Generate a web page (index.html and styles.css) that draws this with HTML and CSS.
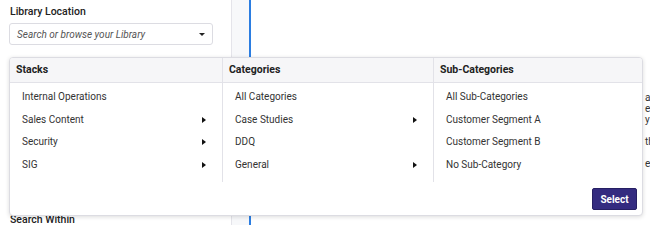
FILE: index.html
```html
<!DOCTYPE html>
<html>
<head>
<meta charset="utf-8">
<link rel="stylesheet" href="styles.css">
</head>
<body>
<div class="app">
  <aside class="sidebar">
    <div class="label">Library Location</div>
    <div class="input">
      <span class="placeholder">Search or browse your Library</span>
      <span class="caret"></span>
    </div>
    <div class="label second">Search Within</div>
  </aside>
  <div class="gutter"></div>
  <div class="bar"></div>
  <main class="main">
    <div class="line">a</div>
    <div class="line">e</div>
    <div class="line">y</div>
    <div class="line">&nbsp;</div>
    <div class="line">th</div>
    <div class="line">&nbsp;</div>
    <div class="line">e</div>
  </main>
</div>

<div class="panel">
  <div class="cols">
    <div class="col c1">
      <div class="head">Stacks</div>
      <ul class="list">
        <li>Internal Operations</li>
        <li class="sub">Sales Content</li>
        <li class="sub">Security</li>
        <li class="sub">SIG</li>
      </ul>
    </div>
    <div class="col c2">
      <div class="head">Categories</div>
      <ul class="list">
        <li>All Categories</li>
        <li class="sub">Case Studies</li>
        <li>DDQ</li>
        <li class="sub">General</li>
      </ul>
    </div>
    <div class="col c3">
      <div class="head">Sub-Categories</div>
      <ul class="list">
        <li>All Sub-Categories</li>
        <li>Customer Segment A</li>
        <li>Customer Segment B</li>
        <li>No Sub-Category</li>
      </ul>
    </div>
  </div>
  <div class="footer">
    <button class="btn">Select</button>
  </div>
</div>
</body>
</html>
```

FILE: styles.css
```css
* { box-sizing: border-box; }
html, body { margin: 0; padding: 0; }
body {
  width: 650px;
  height: 225px;
  overflow: hidden;
  background: #fff;
  font-family: Roboto, "Liberation Sans", Arial, sans-serif;
  color: #333;
  position: relative;
}
.app { display: flex; height: 225px; }
.sidebar {
  width: 232px;
  border-right: 1px solid #e4e4ea;
  padding: 4px 18px 0 9px;
  flex: none;
}
.label {
  font-size: 10.5px;
  line-height: 16px;
  font-weight: 500;
  color: #222;
  margin-left: 1px;
}
.label.second { margin-top: 167px; }
.input {
  margin-top: 3px;
  width: 204px;
  height: 22px;
  border: 1px solid #dcdce2;
  border-radius: 3px;
  display: flex;
  align-items: center;
  justify-content: space-between;
  padding: 0 7px 0 7px;
}
.placeholder {
  font-size: 10px;
  font-style: italic;
  color: #555;
}
.caret {
  width: 0; height: 0;
  border-left: 3px solid transparent;
  border-right: 3px solid transparent;
  border-top: 3px solid #222;
}
.gutter { width: 17px; background: #f7f8fa; flex: none; }
.bar { width: 2px; background: #2b7de1; flex: none; }
.main {
  flex: 1;
  padding: 91.5px 0 0 394px;
  overflow: hidden;
  white-space: nowrap;
}
.line { font-size: 10px; line-height: 11px; color: #333; }

.panel {
  position: absolute;
  left: 9px;
  top: 57px;
  width: 634px;
  height: 159px;
  background: #fff;
  border: 1px solid #dcdce2;
  border-radius: 4px;
  box-shadow: 0 1px 4px rgba(0,0,0,0.14);
  display: flex;
  flex-direction: column;
  overflow: hidden;
}
.cols { display: flex; }
.col.c1 { width: 212px; }
.col.c2 { width: 211px; border-left: 1px solid #e2e2e8; }
.col.c3 { flex: 1; border-left: 1px solid #e2e2e8; }
.head {
  height: 25px;
  background: #f6f6f8;
  border-bottom: 1px solid #e2e2e8;
  font-size: 10.5px;
  font-weight: 700;
  color: #222;
  line-height: 24px;
  padding-left: 6px;
}
.list {
  list-style: none;
  margin: 0;
  padding: 3px 0 6px 0;
}
.list li {
  font-size: 10px;
  line-height: 22.5px;
  height: 22.5px;
  padding: 0 16px 0 12px;
  color: #333;
  display: flex;
  justify-content: space-between;
  align-items: center;
}
.list li.sub::after {
  content: "";
  width: 0; height: 0;
  border-top: 3px solid transparent;
  border-bottom: 3px solid transparent;
  border-left: 4px solid #111;
}
.footer {
  display: flex;
  justify-content: flex-end;
  padding: 6px 5px 0 0;
}
.btn {
  width: 45px;
  height: 22px;
  background: #342b80;
  border: 1px solid #261f63;
  border-radius: 2px;
  color: #fff;
  font-family: Roboto, "Liberation Sans", Arial, sans-serif;
  font-size: 10px;
  font-weight: 700;
  padding: 0;
}
```
